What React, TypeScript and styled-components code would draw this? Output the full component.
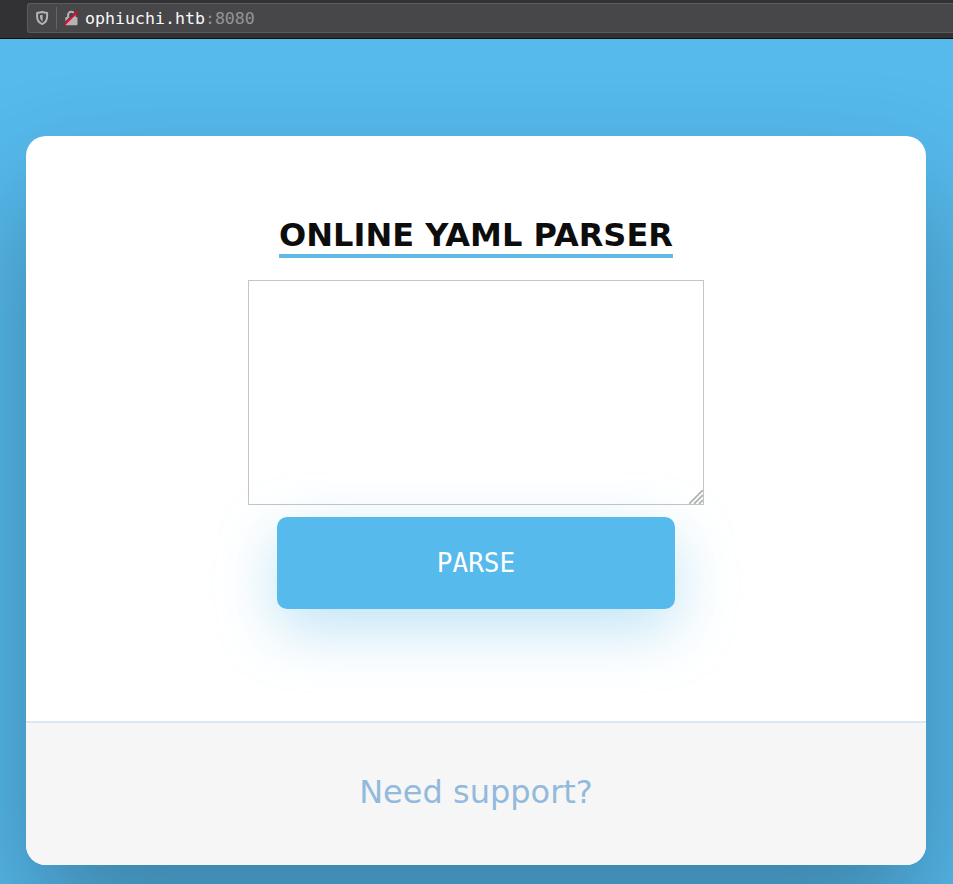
import React from "react";
import styled, { createGlobalStyle } from "styled-components";

const GlobalStyle = createGlobalStyle`
  *, *::before, *::after { box-sizing: border-box; }
  html, body { margin: 0; height: 100%; }
  body { overflow: hidden; background: #56baed; font-family: "DejaVu Sans", sans-serif; }
`;

const Window = styled.div`
  display: flex;
  flex-direction: column;
  height: 884px;
  overflow: hidden;
`;

const Toolbar = styled.header`
  flex: none;
  height: 39px;
  padding: 3px 0 0 27px;
  background: #323234;
  border-bottom: 1px solid #0c0c0d;
`;

const AddressBar = styled.div`
  display: flex;
  align-items: center;
  height: 30px;
  padding-left: 7px;
  background: #474749;
  border: 1px solid #5b5b5d;
  border-right: 0;
  border-radius: 3px 0 0 3px;
`;

const Divider = styled.span`
  width: 1px;
  height: 22px;
  margin: 0 7px 0 6px;
  background: #5e6670;
`;

const Icon = styled.svg`
  display: block;
  flex: none;
`;

const Url = styled.span`
  margin-left: 6px;
  padding-top: 2px;
  color: #f9f9fa;
  font: 16.6px/20px "DejaVu Sans Mono", monospace;
  white-space: pre;
`;

const Port = styled.span`
  color: #949495;
`;

const Page = styled.main`
  flex: 1;
  min-height: 0;
  padding: 97px 27px 0 26px;
  background: #56baed;
`;

const Card = styled.section`
  display: flex;
  flex-direction: column;
  height: 729px;
  overflow: hidden;
  background: #fff;
  border-radius: 20px;
  box-shadow: 0 60px 120px 0 rgba(0, 0, 0, 0.3);
`;

const Form = styled.form`
  display: flex;
  flex: 1;
  flex-direction: column;
  align-items: center;
  padding-top: 80px;
`;

const Title = styled.h1`
  width: 394px;
  height: 42px;
  margin: 0;
  border-bottom: 4px solid #5fbae9;
  color: #0d0d0d;
  font-size: 32px;
  font-weight: 700;
  line-height: 38px;
  text-align: center;
  white-space: nowrap;
`;

const Editor = styled.div`
  position: relative;
  width: 456px;
  height: 225px;
  margin-top: 22px;
`;

const Input = styled.textarea`
  display: block;
  width: 100%;
  height: 100%;
  padding: 4px;
  border: 1px solid #c8c4c1;
  border-radius: 0;
  outline: 0;
  background: #fff;
  font: 26px "DejaVu Sans Mono", monospace;
  resize: none;
`;

const Grip = styled(Icon)`
  position: absolute;
  right: 1px;
  bottom: 1px;
`;

const Submit = styled.button`
  position: relative;
  width: 398px;
  height: 92px;
  margin-top: 12px;
  padding: 0;
  border: 0;
  border-radius: 10px;
  background: #56baed;
  box-shadow: 0 20px 60px 0 rgba(95, 186, 233, 0.4);
  color: #fff;
  font: 26px/92px "DejaVu Sans Mono", monospace;
`;

const Footer = styled.footer`
  display: flex;
  align-items: center;
  justify-content: center;
  height: 144px;
  padding-bottom: 4px;
  border-top: 2px solid #dce8f1;
  background: #f6f6f6;
`;

const SupportLink = styled.a`
  color: #92badd;
  font-size: 32px;
  line-height: 38px;
  text-decoration: none;
`;

export default function App() {
  return (
    <Window>
      <GlobalStyle />
      <Toolbar>
        <AddressBar>
          <Icon width="15" height="16" viewBox="0 0 15 16" fill="none">
            <path d="M7.2 2L12.1 3.1V6.6C12.1 10.6 9.8 13.1 7.2 14.1C4.6 13.1 2.1 10.6 2.1 6.6V3.1Z" stroke="#b4b4b5" strokeWidth="2" strokeLinejoin="round" />
            <path d="M7.6 4.8V11.6C5.8 10.4 5 8.6 5 6.6V5.3Z" fill="#b4b4b5" />
          </Icon>
          <Divider />
          <Icon width="15" height="16" viewBox="0 0 15 16" fill="none">
            <path d="M4.1 8V5A3.2 3.2 0 0 1 10.5 5V8" stroke="#b4b4b5" strokeWidth="2.1" />
            <rect x="1.3" y="7" width="12.2" height="8.2" rx="1" fill="#b4b4b5" />
            <path d="M-.2 13.8L13 .7" stroke="#474749" strokeWidth="1.4" />
            <path d="M.6 14.6L14 1.3" stroke="#f00035" strokeWidth="1.8" />
          </Icon>
          <Url>ophiuchi.htb<Port>:8080</Port></Url>
        </AddressBar>
      </Toolbar>
      <Page>
        <Card>
          <Form onSubmit={(event) => event.preventDefault()}>
            <Title>ONLINE YAML PARSER</Title>
            <Editor>
              <Input aria-label="YAML" spellCheck={false} />
              <Grip width="14" height="14" viewBox="0 0 14 14" fill="none">
                <path d="M0 14L14 0M5 14L14 5M10 14L14 10" stroke="#b2b2b2" strokeWidth="1.8" />
              </Grip>
            </Editor>
            <Submit type="submit">PARSE</Submit>
          </Form>
          <Footer>
            <SupportLink href="#">Need support?</SupportLink>
          </Footer>
        </Card>
      </Page>
    </Window>
  );
}
